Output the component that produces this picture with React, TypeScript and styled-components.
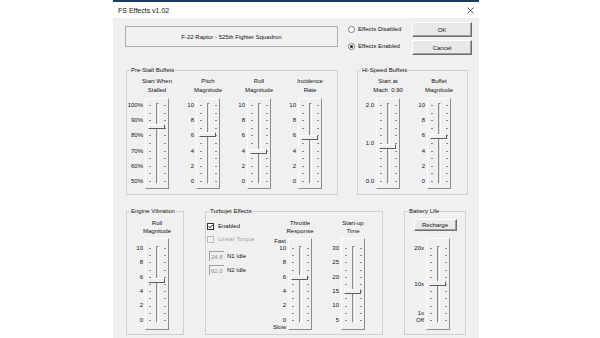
import React from 'react'
import styled, { createGlobalStyle } from 'styled-components'

const GlobalStyle = createGlobalStyle`
  html, body {
    margin: 0;
    padding: 0;
    background: #ffffff;
  }
  body {
    font-family: "Liberation Sans", Arial, sans-serif;
    font-size: 6px;
    color: #111;
    overflow: hidden;
  }
`

const Screen = styled.div`
  width: 600px;
  height: 338px;
  overflow: hidden;
  padding-left: 113px;
  box-sizing: border-box;
`

const Window = styled.div`
  width: 366px;
  height: 338px;
  display: flex;
  flex-direction: column;
  border-top: 2px solid #1d3b5e;
  box-sizing: border-box;
  background: #f0f0f0;
`

const TitleBar = styled.div`
  height: 16px;
  flex-shrink: 0;
  background: #fff;
  display: flex;
  align-items: center;
  justify-content: space-between;
  padding: 0 5px 0 5px;
  font-size: 7px;
`

const Body = styled.div`
  flex: 1;
  padding: 4px 7px 0 12px;
  display: flex;
  flex-direction: column;
`

const TopRow = styled.div`
  display: flex;
  align-items: flex-start;
`

const NameBox = styled.div`
  margin-top: 4px;
  width: 213px;
  height: 21px;
  box-sizing: border-box;
  border: 1px solid #adadad;
  display: flex;
  align-items: center;
  justify-content: center;
`

const Radios = styled.div`
  margin: 3px 0 0 10px;
  display: flex;
  flex-direction: column;
  gap: 9px;
`

const RadioRow = styled.label`
  display: flex;
  align-items: center;
  gap: 3px;
  height: 8px;
`

const RadioDot = styled.span<{ $on?: boolean }>`
  width: 7px;
  height: 7px;
  box-sizing: border-box;
  border-radius: 50%;
  border: 1px solid #7a7a7a;
  background: #fff;
  display: flex;
  align-items: center;
  justify-content: center;
  &::after {
    content: '';
    width: 3px;
    height: 3px;
    border-radius: 50%;
    background: ${p => (p.$on ? '#222' : 'transparent')};
  }
`

const Buttons = styled.div`
  margin-left: auto;
  display: flex;
  flex-direction: column;
  gap: 3px;
`

const Button = styled.div<{ $w?: number; $h?: number }>`
  width: ${p => p.$w ?? 60}px;
  height: ${p => p.$h ?? 15}px;
  box-sizing: border-box;
  background: #e9e9e9;
  border: 1px solid;
  border-color: #fff #6d6d6d #6d6d6d #fff;
  box-shadow: inset -1px -1px #a0a0a0;
  display: flex;
  align-items: center;
  justify-content: center;
`

const GroupRow = styled.div<{ $top: number; $gap: number }>`
  display: flex;
  align-items: flex-start;
  margin-top: ${p => p.$top}px;
  padding-left: 1px;
  gap: ${p => p.$gap}px;
`

const Group = styled.fieldset<{ $w: number }>`
  margin: 0;
  padding: 0;
  min-width: 0;
  width: ${p => p.$w}px;
  box-sizing: border-box;
  border: 1px solid #d0d0d0;
`

const Legend = styled.legend`
  padding: 0 1px;
  margin-left: 3px;
  line-height: 8px;
  font-size: 6px;
`

const GroupBody = styled.div<{ $pad: string; $gap: number }>`
  display: flex;
  align-items: flex-start;
  padding: ${p => p.$pad};
  gap: ${p => p.$gap}px;
`

const Column = styled.div<{ $labelW: number }>`
  display: grid;
  grid-template-columns: ${p => p.$labelW}px 24px;
  align-items: start;
`

const Heading = styled.div<{ $lh: number; $gap: number }>`
  grid-column: 2;
  grid-row: 1;
  display: flex;
  justify-content: center;
  height: ${p => p.$lh * 2}px;
  margin-bottom: ${p => p.$gap}px;
  line-height: ${p => p.$lh}px;
  text-align: center;
  white-space: nowrap;
`

// zero-height so the hanging labels (Fast / Slow) don't stretch the column
const Marks = styled.div<{ $step: number; $rows: number; $offset: number }>`
  grid-column: 1;
  grid-row: 2;
  height: 0;
  display: grid;
  grid-template-rows: repeat(${p => p.$rows}, ${p => p.$step}px);
  margin-top: ${p => p.$offset}px;
  padding-right: 2px;
`

const MarkText = styled.span<{ $row: number }>`
  grid-row: ${p => p.$row};
  display: flex;
  align-items: center;
  justify-content: flex-end;
  line-height: 1;
  white-space: nowrap;
`

const TrackBox = styled.div<{ $h: number }>`
  grid-column: 2;
  grid-row: 2;
  position: relative;
  height: ${p => p.$h}px;
  box-sizing: border-box;
  border: 1px solid;
  border-color: #fdfdfd #8c8c8c #8c8c8c #fdfdfd;
  display: flex;
  align-items: flex-start;
  padding-left: 3px;
`

const Ticks = styled.div<{ $top: number; $h: number; $ml: number }>`
  margin: ${p => p.$top}px 0 0 ${p => p.$ml}px;
  height: ${p => p.$h}px;
  display: flex;
  flex-direction: column;
  justify-content: space-between;
`

const Tick = styled.span`
  width: 2px;
  height: 1px;
  background: #8a8a8a;
`

const Groove = styled.div<{ $top: number; $h: number }>`
  margin: ${p => p.$top}px 0 0 5px;
  width: 3px;
  height: ${p => p.$h}px;
  box-sizing: border-box;
  border: 1px solid;
  border-color: #8a8a8a #fff #fff #8a8a8a;
  background: #e2e2e2;
`

const Thumb = styled.div<{ $top: number }>`
  position: absolute;
  left: 2px;
  top: ${p => p.$top}px;
  width: 17px;
  height: 5px;
  box-sizing: border-box;
  background: #f0f0f0;
  border: 1px solid;
  border-color: #fff #5f5f5f #5f5f5f #fff;
`

const Options = styled.div`
  width: 52px;
  padding: 2px 0 0 1px;
  display: flex;
  flex-direction: column;
  white-space: nowrap;
`

const CheckRow = styled.div<{ $off?: boolean }>`
  display: flex;
  align-items: center;
  gap: 4px;
  height: 10px;
  margin-bottom: 3px;
  color: ${p => (p.$off ? '#a3a3a3' : '#111')};
`

const CheckBox = styled.span<{ $off?: boolean }>`
  width: 7px;
  height: 7px;
  flex-shrink: 0;
  box-sizing: border-box;
  border: 1px solid ${p => (p.$off ? '#bdbdbd' : '#333')};
  background: ${p => (p.$off ? '#f0f0f0' : '#fff')};
  display: flex;
`

const IdleRow = styled.div<{ $top: number }>`
  display: flex;
  align-items: center;
  gap: 3px;
  margin-top: ${p => p.$top}px;
  padding-left: 2px;
`

const IdleBox = styled.span`
  width: 15px;
  height: 10px;
  flex-shrink: 0;
  box-sizing: border-box;
  border-top: 1px solid #a0a0a0;
  border-left: 1px solid #a0a0a0;
  color: #8a8a8a;
  display: flex;
  align-items: center;
  padding-left: 1px;
`

const BatteryBody = styled.div`
  display: flex;
  flex-direction: column;
  align-items: center;
  padding: 4px 0 4px 0;
`

const BatteryScale = styled.div`
  align-self: flex-start;
  margin: 7px 0 0 1px;
`

type Scale = { ticks: number; step: number; padTop: number; padBottom: number; lh: number; gap: number }
type Mark = [number, string]

const ROW1: Scale = { ticks: 11, step: 7.6, padTop: 7, padBottom: 7, lh: 9, gap: 3 }
const ROW2: Scale = { ticks: 11, step: 7.2, padTop: 10, padBottom: 9, lh: 8, gap: 3 }

const tenToZero: Mark[] = [[0, '10'], [2, '8'], [4, '6'], [6, '4'], [8, '2'], [10, '0']]

type SliderProps = {
  scale: Scale
  marks: Mark[]
  value: number
  heading?: React.ReactNode
  labelW?: number
}

const Slider: React.FC<SliderProps> = ({ scale, marks, value, heading, labelW = 18 }) => {
  const span = (scale.ticks - 1) * scale.step
  const ticks = Array.from({ length: scale.ticks }, (_, i) => <Tick key={i} />)
  return (
    <Column $labelW={labelW}>
      {heading && <Heading $lh={scale.lh} $gap={scale.gap}><span>{heading}</span></Heading>}
      <Marks $step={scale.step} $rows={scale.ticks + 2} $offset={scale.padTop - 1.5 * scale.step}>
        {marks.map(([at, text]) => (
          <MarkText key={text} $row={at + 2}>{text}</MarkText>
        ))}
      </Marks>
      <TrackBox $h={scale.padTop + span + scale.padBottom + 1}>
        <Ticks $top={scale.padTop - 1} $h={span + 1} $ml={0}>{ticks}</Ticks>
        <Groove $top={scale.padTop - 3} $h={span + 5} />
        <Ticks $top={scale.padTop - 1} $h={span + 1} $ml={5}>{ticks}</Ticks>
        <Thumb $top={scale.padTop + value * scale.step - 5} />
      </TrackBox>
    </Column>
  )
}

const Check = () => (
  <svg width="5" height="5" viewBox="0 0 5 5">
    <path d="M0.5 2.3 L2 3.8 L4.6 0.8" stroke="#111" strokeWidth="1" fill="none" />
  </svg>
)

const Close = () => (
  <svg width="7" height="7" viewBox="0 0 7 7">
    <path d="M0.5 0.5 L6.5 6.5 M6.5 0.5 L0.5 6.5" stroke="#222" strokeWidth="0.8" />
  </svg>
)

export default function App() {
  return (
    <Screen>
      <GlobalStyle />
      <Window>
        <TitleBar>
          <span>FS Effects v1.02</span>
          <Close />
        </TitleBar>
        <Body>
          <TopRow>
            <NameBox>F-22 Raptor - 525th Fighter Squadron</NameBox>
            <Radios>
              <RadioRow><RadioDot />Effects Disabled</RadioRow>
              <RadioRow><RadioDot $on />Effects Enabled</RadioRow>
            </Radios>
            <Buttons>
              <Button>OK</Button>
              <Button>Cancel</Button>
            </Buttons>
          </TopRow>

          <GroupRow $top={11} $gap={19}>
            <Group $w={212}>
              <Legend>Pre-Stall Buffets</Legend>
              <GroupBody $pad="3px 0 5px 0" $gap={9}>
                <Slider scale={ROW1} value={3} heading={<>Start When<br />Stalled</>}
                  marks={[[0, '100%'], [2, '90%'], [4, '80%'], [6, '70%'], [8, '60%'], [10, '50%']]} />
                <Slider scale={ROW1} value={4.1} heading={<>Pitch<br />Magnitude</>} marks={tenToZero} />
                <Slider scale={ROW1} value={6.3} heading={<>Roll<br />Magnitude</>} marks={tenToZero} />
                <Slider scale={ROW1} value={4.5} heading={<>Incidence<br />Rate</>} marks={tenToZero} />
              </GroupBody>
            </Group>
            <Group $w={111}>
              <Legend>Hi-Speed Buffets</Legend>
              <GroupBody $pad="3px 0 5px 0" $gap={9}>
                <Slider scale={ROW1} value={5.6} heading={<>Start at<br />Mach&nbsp; 0.90</>}
                  marks={[[0, '2.0'], [5, '1.0'], [10, '0.0']]} />
                <Slider scale={ROW1} value={4.4} heading={<>Buffet<br />Magnitude</>} marks={tenToZero} />
              </GroupBody>
            </Group>
          </GroupRow>

          <GroupRow $top={12} $gap={21}>
            <Group $w={58}>
              <Legend>Engine Vibration</Legend>
              <GroupBody $pad="4px 0 4px 0" $gap={0}>
                <Slider scale={ROW2} value={4.7} heading={<>Roll<br />Magnitude</>} marks={tenToZero} />
              </GroupBody>
            </Group>
            <Group $w={178}>
              <Legend>Turbojet Effects</Legend>
              <GroupBody $pad="4px 0 4px 0" $gap={11}>
                <Options>
                  <CheckRow><CheckBox><Check /></CheckBox>Enabled</CheckRow>
                  <CheckRow $off><CheckBox $off />Linear Torque</CheckRow>
                  <IdleRow $top={4}><IdleBox>24.8</IdleBox>N1 Idle</IdleRow>
                  <IdleRow $top={4}><IdleBox>62.0</IdleBox>N2 Idle</IdleRow>
                </Options>
                <Slider scale={ROW2} value={4.3} heading={<>Throttle<br />Response</>}
                  marks={[[-1, 'Fast'], ...tenToZero, [11, 'Slow']]} />
                <Slider scale={ROW2} value={6.25} heading={<>Start-up<br />Time</>}
                  marks={[[0, '30'], [2, '25'], [4, '20'], [6, '15'], [8, '10'], [10, '5']]} />
              </GroupBody>
            </Group>
            <Group $w={62}>
              <Legend>Battery Life</Legend>
              <BatteryBody>
                <Button $w={43} $h={12}>Recharge</Button>
                <BatteryScale>
                  <Slider scale={ROW2} value={5.1} labelW={20}
                    marks={[[0, '20x'], [5, '10x'], [9, '1x'], [10, 'Off']]} />
                </BatteryScale>
              </BatteryBody>
            </Group>
          </GroupRow>
        </Body>
      </Window>
    </Screen>
  )
}
